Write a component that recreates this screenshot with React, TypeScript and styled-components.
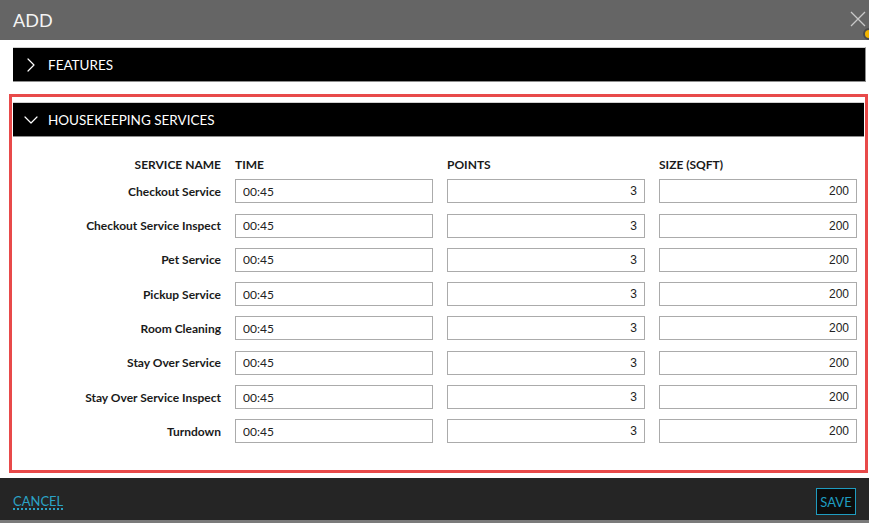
import React from 'react';
import styled, { createGlobalStyle } from 'styled-components';
import { ChevronRight, ChevronDown } from 'lucide-react';

const GlobalStyle = createGlobalStyle`
  html, body {
    margin: 0;
    padding: 0;
    background: #7a7a7a;
  }
  * {
    box-sizing: border-box;
  }
`;

const Modal = styled.div`
  position: relative;
  width: 869px;
  height: 523px;
  display: flex;
  flex-direction: column;
  font-family: Lato, 'Open Sans', sans-serif;
  overflow: hidden;
  border-bottom: 3px solid #7a7a7a;
`;

const Header = styled.div`
  height: 40px;
  flex-shrink: 0;
  background: #656565;
  display: flex;
  align-items: center;
  justify-content: space-between;
  padding: 0 3px 0 13px;
  color: #f4f4f4;
  font-size: 18px;
`;

const CloseButton = styled.button`
  background: none;
  border: 0;
  padding: 0;
  width: 16px;
  height: 16px;
  margin-top: -2px;
  display: flex;
  cursor: pointer;
`;

const HelperDot = styled.span`
  position: absolute;
  right: -6px;
  top: 28px;
  width: 12px;
  height: 12px;
  border-radius: 50%;
  border: 2px solid #4a4a4a;
  background: #f2b400;
`;

const Body = styled.div`
  flex: 1;
  background: #fff;
  padding: 7px 3px 0 13px;
`;

const Bar = styled.div`
  height: 35px;
  background: #000;
  color: #fff;
  display: flex;
  align-items: center;
  gap: 5px;
  padding-left: 6px;
  font-size: 13.5px;
  border-top: 1px solid #d0d0d0;
  border-right: 1px solid #8e8e8e;
  border-bottom: 1px solid #8e8e8e;
  text-transform: uppercase;
`;

const Section = styled.div`
  position: relative;
  margin-top: 20px;
  padding-bottom: 30px;

  &::after {
    content: '';
    position: absolute;
    top: -8px;
    left: -4px;
    right: -2px;
    bottom: 0;
    border: 3px solid #e84a4a;
    box-shadow: inset 0 0 0 1px #fff;
    outline: 1px dashed #fff;
    outline-offset: -4px;
    pointer-events: none;
  }
`;

const Grid = styled.div`
  display: grid;
  grid-template-columns: 1fr 198px 198px 198px;
  column-gap: 14px;
  row-gap: 10.3px;
  padding: 21px 9px 0 0;
  align-items: center;
`;

const HeadCell = styled.div<{ $right?: boolean }>`
  font-size: 12px;
  font-weight: 700;
  line-height: 14px;
  margin-bottom: -3px;
  color: #1a1a1a;
  text-align: ${(p) => (p.$right ? 'right' : 'left')};
`;

const Label = styled.div`
  font-size: 12px;
  font-weight: 700;
  color: #1a1a1a;
  text-align: right;
`;

const Field = styled.input<{ $numeric?: boolean }>`
  width: 100%;
  height: 24px;
  border: 1px solid #ababab;
  border-radius: 0;
  padding: 0 7px;
  font-size: 12px;
  color: #222;
  background: #fff;
  font-family: ${(p) => (p.$numeric ? "'Liberation Sans', Arial, sans-serif" : 'Lato, sans-serif')};
  text-align: ${(p) => (p.$numeric ? 'right' : 'left')};
`;

const Footer = styled.div`
  height: 42px;
  flex-shrink: 0;
  background: #252525;
  display: flex;
  align-items: center;
  justify-content: space-between;
  padding: 5px 13px 0;
`;

const CancelLink = styled.a`
  color: #2ba3c6;
  font-size: 13px;
  text-decoration: none;
  border-bottom: 2px dotted #2ba3c6;
  line-height: 14px;
  cursor: pointer;
`;

const SaveButton = styled.button`
  font-family: Lato, sans-serif;
  font-size: 13px;
  color: #1f9cc0;
  background: #0c0c0c;
  border: 1px solid #1f9cc0;
  height: 27px;
  width: 40px;
  padding: 0;
  cursor: pointer;
`;

const services = [
  'Checkout Service',
  'Checkout Service Inspect',
  'Pet Service',
  'Pickup Service',
  'Room Cleaning',
  'Stay Over Service',
  'Stay Over Service Inspect',
  'Turndown',
];

const App = () => {
  return (
    <Modal>
      <GlobalStyle />
      <Header>
        <span>ADD</span>
        <CloseButton aria-label="close">
          <svg width="16" height="16" viewBox="0 0 16 16">
            <path d="M1 1 L15 15 M15 1 L1 15" stroke="#c8c8c8" strokeWidth="1.3" />
          </svg>
        </CloseButton>
      </Header>
      <HelperDot />
      <Body>
        <Bar>
          <ChevronRight size={24} strokeWidth={1.2} />
          Features
        </Bar>
        <Section>
          <Bar>
            <ChevronDown size={24} strokeWidth={1.2} />
            Housekeeping Services
          </Bar>
          <Grid>
            <HeadCell $right>SERVICE NAME</HeadCell>
            <HeadCell>TIME</HeadCell>
            <HeadCell>POINTS</HeadCell>
            <HeadCell>SIZE (SQFT)</HeadCell>
            {services.map((name) => (
              <React.Fragment key={name}>
                <Label>{name}</Label>
                <Field defaultValue="00:45" />
                <Field $numeric defaultValue="3" />
                <Field $numeric defaultValue="200" />
              </React.Fragment>
            ))}
          </Grid>
        </Section>
      </Body>
      <Footer>
        <CancelLink>CANCEL</CancelLink>
        <SaveButton>SAVE</SaveButton>
      </Footer>
    </Modal>
  );
};

export default App;
